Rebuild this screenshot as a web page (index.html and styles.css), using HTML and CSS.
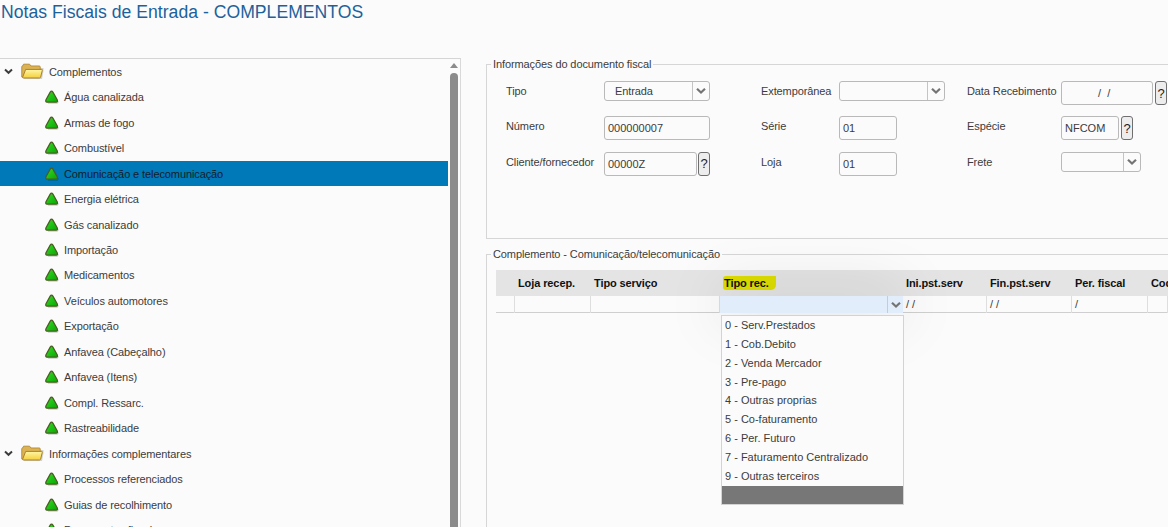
FILE: index.html
```html
<!DOCTYPE html>
<html lang="pt-BR">
<head>
  <meta charset="UTF-8" />
  <meta name="viewport" content="width=device-width, initial-scale=1.0" />
  <title>Notas Fiscais de Entrada</title>
  <link rel="stylesheet" href="styles.css">
</head>
<body>
  <svg class="sprite" width="0" height="0">
    <defs>
      <linearGradient id="folder-fill" x1="0" y1="0" x2="0" y2="1">
        <stop offset="0" stop-color="#fff6a6" />
        <stop offset="1" stop-color="#f6cf3a" />
      </linearGradient>
      <linearGradient id="green-fill" x1="0" y1="0" x2="1" y2="1">
        <stop offset="0" stop-color="#3ada2c" />
        <stop offset="1" stop-color="#05a800" />
      </linearGradient>
    </defs>
    <symbol id="folder" viewBox="0 0 24 17">
      <path d="M3 15.500 V5 H22.500 V8 L21 16 H3.500z" fill="#000" opacity=".16" />
      <path d="M.800 14 V3.600 Q.800 3 1.600 3 L2.600 1.200 H8.600 L10 3 H18.300 Q19.200 3 19.200 4 V13 L17 14.600z" fill="#dcb254" stroke="#b98f35" />
      <path d="M4.700 6.400 H20.800 Q21.500 6.400 21.300 7.300 L19.600 14.300 Q19.300 15 18.600 15 H2.400 Q1.400 15 1.700 14z" fill="url(#folder-fill)" stroke="#a9822c" />
    </symbol>
    <symbol id="triangle" viewBox="0 0 14 14">
      <path d="M3 13.200 H12.500 L13.500 11.500" fill="none" stroke="#000" stroke-opacity=".2" />
      <path d="M6.500 1.200 Q7.300 1.200 7.900 2.100 L12.200 9.800 Q13 12.200 11.300 12.200 H2 Q.200 12.200 1 9.800 L5.200 2.100 Q5.800 1.200 6.500 1.200z" fill="url(#green-fill)" stroke="#4c5a22" stroke-width="1.200" />
    </symbol>
    <symbol id="chevron" viewBox="0 0 10 8">
      <path d="M1 1.700 L5 5.500 L9 1.700" fill="none" stroke="currentColor" stroke-width="2.200" />
    </symbol>
  </svg>

  <h1 class="page-title">Notas Fiscais de Entrada - COMPLEMENTOS</h1>

  <div class="content">
    <div class="tree-panel">
      <ul class="tree">
        <li class="group"><svg class="toggle"><use href="#chevron" /></svg><svg class="folder"><use href="#folder" /></svg><span>Complementos</span></li>
        <li><svg><use href="#triangle" /></svg><span>Água canalizada</span></li>
        <li><svg><use href="#triangle" /></svg><span>Armas de fogo</span></li>
        <li><svg><use href="#triangle" /></svg><span>Combustível</span></li>
        <li class="selected"><svg><use href="#triangle" /></svg><span>Comunicação e telecomunicação</span></li>
        <li><svg><use href="#triangle" /></svg><span>Energia elétrica</span></li>
        <li><svg><use href="#triangle" /></svg><span>Gás canalizado</span></li>
        <li><svg><use href="#triangle" /></svg><span>Importação</span></li>
        <li><svg><use href="#triangle" /></svg><span>Medicamentos</span></li>
        <li><svg><use href="#triangle" /></svg><span>Veículos automotores</span></li>
        <li><svg><use href="#triangle" /></svg><span>Exportação</span></li>
        <li><svg><use href="#triangle" /></svg><span>Anfavea (Cabeçalho)</span></li>
        <li><svg><use href="#triangle" /></svg><span>Anfavea (Itens)</span></li>
        <li><svg><use href="#triangle" /></svg><span>Compl. Ressarc.</span></li>
        <li><svg><use href="#triangle" /></svg><span>Rastreabilidade</span></li>
        <li class="group"><svg class="toggle"><use href="#chevron" /></svg><svg class="folder"><use href="#folder" /></svg><span>Informações complementares</span></li>
        <li><svg><use href="#triangle" /></svg><span>Processos referenciados</span></li>
        <li><svg><use href="#triangle" /></svg><span>Guias de recolhimento</span></li>
        <li><svg><use href="#triangle" /></svg><span>Documentos fiscais</span></li>
      </ul>
      <div class="scrollbar">
        <div class="scroll-up"></div>
        <div class="thumb"></div>
      </div>
    </div>

    <div class="main">
      <fieldset class="box info">
        <legend>Informações do documento fiscal</legend>
        <div class="form">
          <label>Tipo</label>
          <div class="field"><div class="select w-lg"><span>Entrada</span><i><svg><use href="#chevron" /></svg></i></div></div>
          <label>Extemporânea</label>
          <div class="field"><div class="select w-lg"><span></span><i><svg><use href="#chevron" /></svg></i></div></div>
          <label>Data Recebimento</label>
          <div class="field"><div class="input w-date">/&nbsp; /</div><button class="help">?</button></div>

          <label>Número</label>
          <div class="field"><div class="input w-lg">000000007</div></div>
          <label>Série</label>
          <div class="field"><div class="input w-sm">01</div></div>
          <label>Espécie</label>
          <div class="field"><div class="input w-sm">NFCOM</div><button class="help">?</button></div>

          <label>Cliente/fornecedor</label>
          <div class="field cliente"><div class="input w-md">00000Z</div><button class="help">?</button></div>
          <label>Loja</label>
          <div class="field"><div class="input w-sm">01</div></div>
          <label>Frete</label>
          <div class="field"><div class="select w-frete"><span></span><i><svg><use href="#chevron" /></svg></i></div></div>
        </div>
      </fieldset>

      <fieldset class="box complement">
        <legend>Complemento - Comunicação/telecomunicação</legend>
        <div class="grid-table">
          <div class="row head">
            <div></div>
            <div>Loja recep.</div>
            <div>Tipo serviço</div>
            <div><span class="mark">Tipo rec.</span></div>
            <div>Ini.pst.serv</div>
            <div>Fin.pst.serv</div>
            <div>Per. fiscal</div>
            <div>Cod</div>
          </div>
          <div class="row">
            <div></div>
            <div></div>
            <div></div>
            <div class="editing">
              <i><svg><use href="#chevron" /></svg></i>
              <ul class="dropdown">
                <li>0 - Serv.Prestados</li>
                <li>1 - Cob.Debito</li>
                <li>2 - Venda Mercador</li>
                <li>3 - Pre-pago</li>
                <li>4 - Outras proprias</li>
                <li>5 - Co-faturamento</li>
                <li>6 - Per. Futuro</li>
                <li>7 - Faturamento Centralizado</li>
                <li>9 - Outras terceiros</li>
                <li class="active"></li>
              </ul>
            </div>
            <div>/ /</div>
            <div>/ /</div>
            <div>/</div>
            <div></div>
          </div>
        </div>
      </fieldset>
    </div>
  </div>
</body>
</html>
```
FILE: styles.css
```css
* {
  box-sizing: border-box;
}

body {
  margin: 0;
  height: 527px;
  overflow: hidden;
  background: #fbfbfb;
  color: #3c3c3c;
  font-family: "Liberation Sans", Arial, sans-serif;
  font-size: 11px;
  letter-spacing: -0.1px;
}

ul {
  list-style: none;
  margin: 0;
  padding: 0;
}

.sprite {
  position: absolute;
}

.page-title {
  margin: 0;
  height: 58px;
  padding: 2px 0 0 1px;
  color: #1b629c;
  font-size: 17.6px;
  font-weight: normal;
  letter-spacing: 0.02px;
  line-height: 21px;
  white-space: nowrap;
}

.content {
  display: flex;
  height: 469px;
  overflow: hidden;
}

/* tree */
.tree-panel {
  display: flex;
  flex: none;
  width: 461px;
  overflow: hidden;
  border-top: 1px solid #d5d5d5;
  border-right: 1px solid #d9d9d9;
}

.tree {
  width: 448px;
}

.tree li {
  display: flex;
  align-items: center;
  height: 25.47px;
  padding-left: 45px;
  white-space: nowrap;
}

.tree li svg {
  flex: none;
  width: 14px;
  height: 14px;
  margin-right: 5px;
}

.tree .group {
  padding-left: 4px;
}

.tree .group .toggle {
  width: 9px;
  height: 7px;
  margin-right: 8px;
}

.tree .group .folder {
  width: 24px;
  height: 17px;
  margin-right: 4px;
}

.tree .selected {
  background: #0079b8;
  color: #10202c;
}

.scrollbar {
  width: 12px;
  padding: 4px 0 0 2px;
}

.scroll-up {
  width: 8px;
  border: 4px solid transparent;
  border-top: 0;
  border-bottom: 5px solid #8b8b8b;
}

.thumb {
  width: 8px;
  height: 470px;
  margin-top: 5px;
  border-radius: 4px;
  background: #8b8b8b;
}

/* fieldsets */
.main {
  flex: 1;
  min-width: 0;
  padding-left: 25px;
}

.box {
  min-width: 0;
  margin: 0;
  padding: 0;
  border: 1px solid #d6d6d6;
  border-right: 0;
}

.box legend {
  margin-left: 4px;
  padding: 0 2px;
  line-height: 13px;
}

.info {
  height: 181px;
}

.form {
  display: grid;
  grid-template-columns: 98px 157px 78px 128px 94px 120px;
  grid-auto-rows: 35.4px;
  padding: 10px 0 0 19px;
}

.form label {
  padding-top: 4px;
  line-height: 13px;
  white-space: nowrap;
}

.field {
  display: flex;
  gap: 2px;
  align-items: flex-start;
}

.field.cliente {
  gap: 1px;
}

.input,
.select {
  display: flex;
  align-items: center;
  border: 1px solid #b9b9b9;
  border-radius: 3px;
}

.input {
  height: 24px;
  padding-left: 3px;
  letter-spacing: 0;
}

.select {
  height: 20px;
}

.select span {
  flex: 1;
  padding-left: 10px;
}

.select i {
  display: flex;
  align-items: center;
  justify-content: center;
  width: 17px;
  height: 100%;
  border-left: 1px solid #c4c4c4;
  color: #747474;
}

.select svg,
.editing svg {
  width: 10px;
  height: 8px;
}

.w-lg {
  width: 106px;
}

.w-md {
  width: 93px;
}

.w-sm {
  width: 58px;
}

.w-date {
  width: 92px;
  padding-left: 36px;
}

.w-frete {
  width: 80px;
}

.help {
  width: 12px;
  height: 24px;
  padding: 0;
  border: 1px solid #6f6f6f;
  border-radius: 3px;
  background: #ededed;
  color: #222;
  font-family: inherit;
  font-size: 13px;
}

/* table */
.complement {
  height: 300px;
  margin-top: 9px;
}

.grid-table {
  margin: 9px 0 0 9px;
  overflow-x: clip;
}

.row {
  display: grid;
  grid-template-columns: 19px 76px 129px 183px 84px 85px 76px 1fr;
  height: 17px;
  border-bottom: 1px solid #cfcfcf;
}

.row > div {
  padding-left: 3px;
  border-right: 1px solid #dedede;
  line-height: 17px;
  white-space: nowrap;
}

.row.head {
  height: 26px;
  border: 0;
  background: #e4e4e4;
  color: #111;
  font-weight: bold;
}

.row.head > div {
  min-width: 0;
  border: 0;
  line-height: 27px;
}

.mark {
  padding: 1px 7px 1px 1px;
  border-radius: 3px 0 5px 3px;
  background: #dede00;
}

.row .editing {
  position: relative;
  display: flex;
  justify-content: flex-end;
  padding: 0;
  border: 0;
  background: #e1edfa;
  box-shadow: 0 0 60px rgba(0, 0, 0, 0.22);
}

.editing i {
  display: flex;
  align-items: center;
  justify-content: center;
  width: 16px;
  border-left: 1px solid #c4ccd4;
  color: #747474;
}

.dropdown {
  position: absolute;
  top: 19px;
  left: 1px;
  width: 183px;
  border: 1px solid #d3d3d3;
  background: #fbfbfb;
  letter-spacing: 0;
}

.dropdown li {
  height: 18.85px;
  padding-left: 3px;
  line-height: 19px;
}

.dropdown .active {
  background: #777;
}
```
